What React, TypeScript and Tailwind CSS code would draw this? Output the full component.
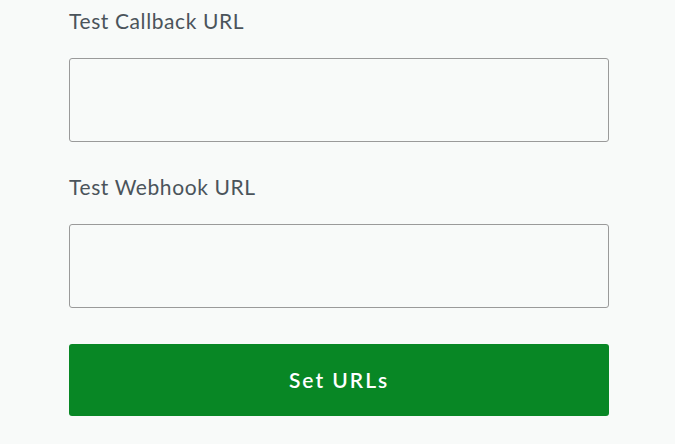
export default function App() {
  return (
    <main className="min-h-[444px] w-full bg-[#f8faf9] pl-[69px] pt-[6px] font-['Lato','Open_Sans',sans-serif]">
      <form className="flex w-[540px] flex-col" onSubmit={(e) => e.preventDefault()}>
        <label className="mb-[22px] block text-[21px] leading-[30px] tracking-[0.6px] text-[#4b545b]">Test Callback URL</label>
        <input
          type="text"
          className="h-[84px] w-full rounded-[3px] border border-[#9a9a9a] bg-transparent px-3 outline-none"
        />
        <label className="mb-[22px] mt-[30px] block text-[21px] leading-[30px] tracking-[0.6px] text-[#4b545b]">Test Webhook URL</label>
        <input
          type="text"
          className="h-[84px] w-full rounded-[3px] border border-[#9a9a9a] bg-transparent px-3 outline-none"
        />
        <button
          type="submit"
          className="mt-[36px] h-[72px] w-full rounded-[3px] bg-[#088725] text-[21px] font-semibold tracking-[2px] text-white"
        >
          Set URLs
        </button>
      </form>
    </main>
  );
}
